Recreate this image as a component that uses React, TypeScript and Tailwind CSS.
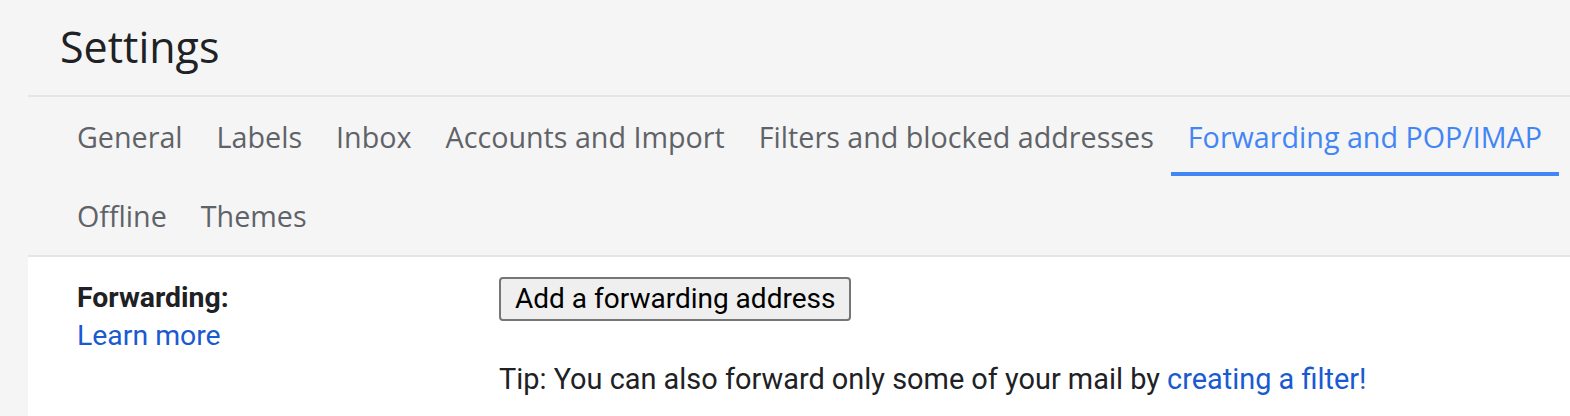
import React from "react";

const tabsRow1 = [
  "General",
  "Labels",
  "Inbox",
  "Accounts and Import",
  "Filters and blocked addresses",
  "Forwarding and POP/IMAP",
];
const tabsRow2 = ["Offline", "Themes"];
const active = "Forwarding and POP/IMAP";

function Tab({ label }: { label: string }) {
  const isActive = label === active;
  return (
    <div
      className={`flex h-[79px] items-center border-b-4 px-[17px] pt-[4px] text-[28.7px] ${
        isActive ? "border-[#4285f4] text-[#4285f4]" : "border-transparent text-[#5f6368]"
      }`}
    >
      {label}
    </div>
  );
}

export default function App() {
  return (
    <div className="min-h-[416px] w-[1570px] overflow-hidden bg-[#f5f5f5] pl-[28px]">
      <div className="font-['Open_Sans',sans-serif]">
        <div className="flex h-[95px] items-center pl-[32px] text-[43px] text-[#202124]">
          Settings
        </div>
        <div className="border-t-2 border-b-2 border-[#e3e5e8] pl-[32px]">
          <div className="flex">
            {tabsRow1.map((t) => (
              <Tab key={t} label={t} />
            ))}
          </div>
          <div className="flex">
            {tabsRow2.map((t) => (
              <Tab key={t} label={t} />
            ))}
          </div>
        </div>
      </div>

      <div className="flex min-h-[160px] bg-white pt-[20px] font-['Roboto',sans-serif] text-[28px] text-[#202124]">
        <div className="w-[471px] shrink-0 pl-[49px]">
          <div className="text-[28.4px] font-bold leading-[42px]">Forwarding:</div>
          <a className="block text-[28.4px] leading-[34px] text-[#1a5ad0]">Learn more</a>
        </div>
        <div>
          <button className="h-[44px] rounded-[4px] border-2 border-[#767676] bg-[#efefef] px-[14px] text-[28px] leading-none text-black">
            Add a forwarding address
          </button>
          <p className="mt-[41px] text-[28.9px] leading-[34px]">
            Tip: You can also forward only some of your mail by{" "}
            <a className="text-[#1a5ad0]">creating a filter!</a>
          </p>
        </div>
      </div>
    </div>
  );
}
